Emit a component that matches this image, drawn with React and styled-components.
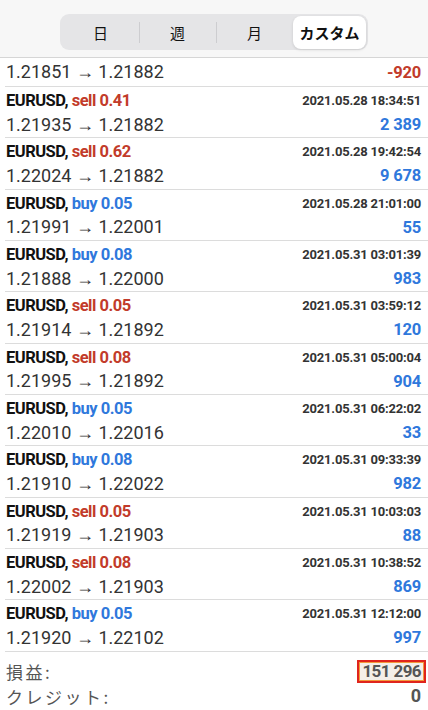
import React from 'react';
import styled, { createGlobalStyle } from 'styled-components';

const GlobalStyle = createGlobalStyle`
    html, body {
        margin: 0;
        padding: 0;
        background: #ffffff;
    }
    body {
        font-family: Roboto, 'Liberation Sans', 'Noto Sans CJK JP', sans-serif;
        color: #222;
    }
`;

const Page = styled.div`
    width: 428px;
    height: 710px;
    overflow: hidden;
    background: #ffffff;
`;

const Header = styled.header`
    height: 58px;
    background: #f7f7f7;
    border-bottom: 1px solid #d6d6d6;
    display: flex;
    justify-content: center;
    padding-top: 14px;
    box-sizing: border-box;
`;

const Segmented = styled.div`
    width: 308px;
    height: 36px;
    background: #e5e5e7;
    border-radius: 9px;
    display: flex;
    align-items: center;
    padding: 1px 2px;
    box-sizing: border-box;
`;

const Segment = styled.div`
    flex: ${p => (p.$wide ? '0 0 73px' : '1')};
    height: 33px;
    display: flex;
    align-items: center;
    justify-content: center;
    font-size: 15px;
    font-weight: ${p => (p.$active ? 700 : 400)};
    color: #111;
    border-radius: 8px;
    background: ${p => (p.$active ? '#ffffff' : 'transparent')};
    box-shadow: ${p => (p.$active ? '0 1px 3px rgba(0,0,0,0.12)' : 'none')};
    position: relative;
    font-family: 'Noto Sans CJK JP', sans-serif;

    & + &::before {
        content: '';
        display: ${p => (p.$noDivider ? 'none' : 'block')};
        position: absolute;
        left: 0;
        top: 6px;
        height: 21px;
        width: 1px;
        background: #cdcdd0;
    }
`;

const List = styled.div`
    display: flex;
    flex-direction: column;
`;

const Row = styled.div`
    height: ${p => (p.$partial ? '29px' : '51.35px')};
    margin-left: 5px;
    padding: 0 7px 0 1px;
    border-bottom: 1px solid #dcdcdc;
    box-sizing: border-box;
    display: flex;
    flex-direction: column;
    justify-content: ${p => (p.$partial ? 'center' : 'flex-start')};
`;

const TopLine = styled.div`
    height: 23px;
    padding-top: 2px;
    display: flex;
    align-items: center;
    justify-content: space-between;
`;

const BottomLine = styled.div`
    height: 26px;
    display: flex;
    align-items: center;
    justify-content: space-between;
`;

const Symbol = styled.span`
    font-size: 16.5px;
    font-weight: 700;
    letter-spacing: -0.5px;
    color: #111;
`;

const Side = styled.span`
    color: ${p => (p.$buy ? '#2f78dc' : '#c23b2a')};
`;

const Time = styled.span`
    font-size: 13px;
    font-weight: 700;
    color: #333;
    letter-spacing: -0.2px;
`;

const Prices = styled.span`
    font-size: 18px;
    font-weight: 400;
    color: #333;
`;

const Profit = styled.span`
    font-size: 16.5px;
    font-weight: 700;
    letter-spacing: -0.2px;
    color: ${p => (p.$loss ? '#c23b2a' : '#2f78dc')};
`;

const Summary = styled.div`
    margin-left: 5px;
    padding: 7px 7px 0 1px;
    display: flex;
    flex-direction: column;
`;

const SummaryLine = styled.div`
    height: 25px;
    display: flex;
    align-items: center;
    justify-content: space-between;
`;

const Label = styled.span`
    font-size: 17px;
    line-height: 1;
    letter-spacing: 2.5px;
    color: #555;
    font-family: 'Noto Sans CJK JP', sans-serif;
`;

const Value = styled.span`
    font-size: 18px;
    line-height: 1;
    font-weight: 700;
    color: #555;
`;

const Highlight = styled(Value)`
    margin-right: -5px;
    padding: 0 3px;
    font-size: 17px;
    line-height: 19px;
    letter-spacing: -0.6px;
    background: #f4efe8;
    border: 2px solid #e0241c;
    outline: 1px solid #f29a3c;
    outline-offset: -3px;
`;

const trades = [
    { side: 'sell', lot: '0.41', time: '2021.05.28 18:34:51', from: '1.21935', to: '1.21882', profit: '2 389' },
    { side: 'sell', lot: '0.62', time: '2021.05.28 19:42:54', from: '1.22024', to: '1.21882', profit: '9 678' },
    { side: 'buy', lot: '0.05', time: '2021.05.28 21:01:00', from: '1.21991', to: '1.22001', profit: '55' },
    { side: 'buy', lot: '0.08', time: '2021.05.31 03:01:39', from: '1.21888', to: '1.22000', profit: '983' },
    { side: 'sell', lot: '0.05', time: '2021.05.31 03:59:12', from: '1.21914', to: '1.21892', profit: '120' },
    { side: 'sell', lot: '0.08', time: '2021.05.31 05:00:04', from: '1.21995', to: '1.21892', profit: '904' },
    { side: 'buy', lot: '0.05', time: '2021.05.31 06:22:02', from: '1.22010', to: '1.22016', profit: '33' },
    { side: 'buy', lot: '0.08', time: '2021.05.31 09:33:39', from: '1.21910', to: '1.22022', profit: '982' },
    { side: 'sell', lot: '0.05', time: '2021.05.31 10:03:03', from: '1.21919', to: '1.21903', profit: '88' },
    { side: 'sell', lot: '0.08', time: '2021.05.31 10:38:52', from: '1.22002', to: '1.21903', profit: '869' },
    { side: 'buy', lot: '0.05', time: '2021.05.31 12:12:00', from: '1.21920', to: '1.22102', profit: '997' },
];

const App = () => {
    return (
        <Page>
            <GlobalStyle />
            <Header>
                <Segmented>
                    <Segment>日</Segment>
                    <Segment>週</Segment>
                    <Segment>月</Segment>
                    <Segment $wide $active $noDivider>カスタム</Segment>
                </Segmented>
            </Header>
            <List>
                <Row $partial>
                    <BottomLine>
                        <Prices>1.21851 → 1.21882</Prices>
                        <Profit $loss>-920</Profit>
                    </BottomLine>
                </Row>
                {trades.map(t => (
                    <Row key={t.time}>
                        <TopLine>
                            <Symbol>
                                EURUSD, <Side $buy={t.side === 'buy'}>{t.side} {t.lot}</Side>
                            </Symbol>
                            <Time>{t.time}</Time>
                        </TopLine>
                        <BottomLine>
                            <Prices>{t.from} → {t.to}</Prices>
                            <Profit>{t.profit}</Profit>
                        </BottomLine>
                    </Row>
                ))}
            </List>
            <Summary>
                <SummaryLine>
                    <Label>損益:</Label>
                    <Highlight>151 296</Highlight>
                </SummaryLine>
                <SummaryLine>
                    <Label>クレジット:</Label>
                    <Value>0</Value>
                </SummaryLine>
            </Summary>
        </Page>
    );
};

export default App;
